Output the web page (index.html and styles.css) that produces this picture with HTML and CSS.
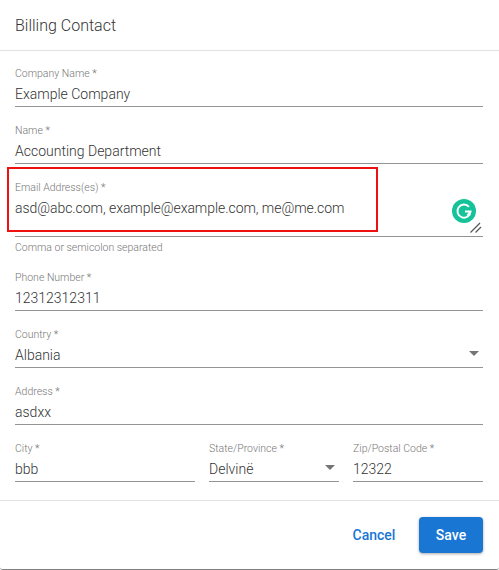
FILE: index.html
```html
<!DOCTYPE html>
<html>
	<head>
		<link rel="stylesheet" href="styles.css">
	</head>
	<body>
		<div class="dialog">
			<div class="title">Billing Contact</div>
			<div class="form">
				<div class="field">
					<label>Company Name *</label>
					<div class="value">Example Company</div>
				</div>
				<div class="field">
					<label>Name *</label>
					<div class="value">Accounting Department</div>
				</div>
				<div class="group">
					<div class="field tall">
						<label>Email Address(es) *</label>
						<div class="value emails">asd@abc.com, example@example.com, me@me.com</div>
						<svg class="grip" width="12" height="11" viewBox="0 0 12 11">
							<path d="M0.5 10.5L10 1M5.5 10.5L11 5" stroke="#555" stroke-width="1.2" fill="none"/>
						</svg>
						<svg class="gram" width="24" height="24" viewBox="0 0 24 24">
							<circle cx="12" cy="12" r="12" fill="#15c39a"/>
							<path d="M17 7.8A6.6 6.6 0 1 0 18.6 12.5H13M18.6 12.5L15.4 16.6" stroke="#fff" stroke-width="1.9" fill="none"/>
						</svg>
					</div>
					<div class="helper">Comma or semicolon separated</div>
				</div>
				<div class="field">
					<label>Phone Number *</label>
					<div class="value">12312312311</div>
				</div>
				<div class="field">
					<label>Country *</label>
					<div class="value">Albania</div>
					<span class="arrow"></span>
				</div>
				<div class="field">
					<label>Address *</label>
					<div class="value">asdxx</div>
				</div>
				<div class="row">
					<div class="field">
						<label>City *</label>
						<div class="value">bbb</div>
					</div>
					<div class="field">
						<label>State/Province *</label>
						<div class="value">Delvinë</div>
						<span class="arrow"></span>
					</div>
					<div class="field">
						<label>Zip/Postal Code *</label>
						<div class="value">12322</div>
					</div>
				</div>
			</div>
			<div class="actions">
				<button class="cancel">Cancel</button>
				<button class="save">Save</button>
			</div>
		</div>
		<div class="redbox"></div>
	</body>
</html>
```

FILE: styles.css
```css
html, body {
	margin: 0;
	padding: 0;
	height: 570px;
	overflow: hidden;
	background-color: #fff;
}
body {
	position: relative;
	font-family: Roboto, sans-serif;
	color: #333;
}
.dialog {
	width: 499px;
	height: 570px;
	box-sizing: border-box;
	border-bottom: 1px solid #808080;
	border-radius: 0 0 3px 3px;
}
.title {
	height: 50px;
	padding-left: 15px;
	line-height: 52px;
	font-size: 16px;
	font-weight: 300;
	color: #333;
	border-bottom: 1px solid #e2e2e2;
}
.form {
	display: flex;
	flex-direction: column;
	gap: 16px;
	padding: 15px 16px 0 15px;
	height: 450px;
	box-sizing: border-box;
	border-bottom: 1px solid #e2e2e2;
	margin-bottom: 16px;
}
.field {
	position: relative;
	height: 41px;
	box-sizing: border-box;
	border-bottom: 1px solid #949494;
}
.field.tall {
	height: 57px;
}
.field label {
	display: block;
	font-size: 10.5px;
	font-weight: 300;
	line-height: 14px;
	padding-top: 1px;
	color: #777;
}
.value {
	font-size: 14px;
	font-weight: 300;
	line-height: 20px;
	margin-top: 3px;
	white-space: nowrap;
}
.emails {
	letter-spacing: -0.05px;
}
.helper {
	font-size: 10.5px;
	font-weight: 300;
	color: #777;
	line-height: 14px;
	padding-top: 4px;
	height: 13px;
}
.row {
	display: grid;
	grid-template-columns: 180px 130px 130px;
	gap: 14px;
}
.arrow {
	position: absolute;
	right: 4px;
	top: 24px;
	border-left: 5px solid transparent;
	border-right: 5px solid transparent;
	border-top: 5px solid #757575;
}
.grip {
	position: absolute;
	right: 1px;
	bottom: 3px;
}
.gram {
	position: absolute;
	left: 437px;
	top: 19px;
}
.actions {
	display: flex;
	justify-content: flex-end;
	align-items: center;
	gap: 20px;
	padding-right: 16px;
}
button {
	font-family: Roboto, sans-serif;
	font-size: 14px;
	font-weight: 500;
	border: none;
	height: 36px;
	background: none;
	padding: 0;
}
.cancel {
	color: #1976d2;
	width: 50px;
}
.save {
	width: 64px;
	color: #fff;
	background-color: #1976d2;
	border-radius: 4px;
	box-shadow: 0 1px 3px rgba(0, 0, 0, 0.35);
}
.redbox {
	position: absolute;
	left: 7px;
	top: 167px;
	width: 367px;
	height: 61px;
	border: 2px solid #ee1111;
}
```
